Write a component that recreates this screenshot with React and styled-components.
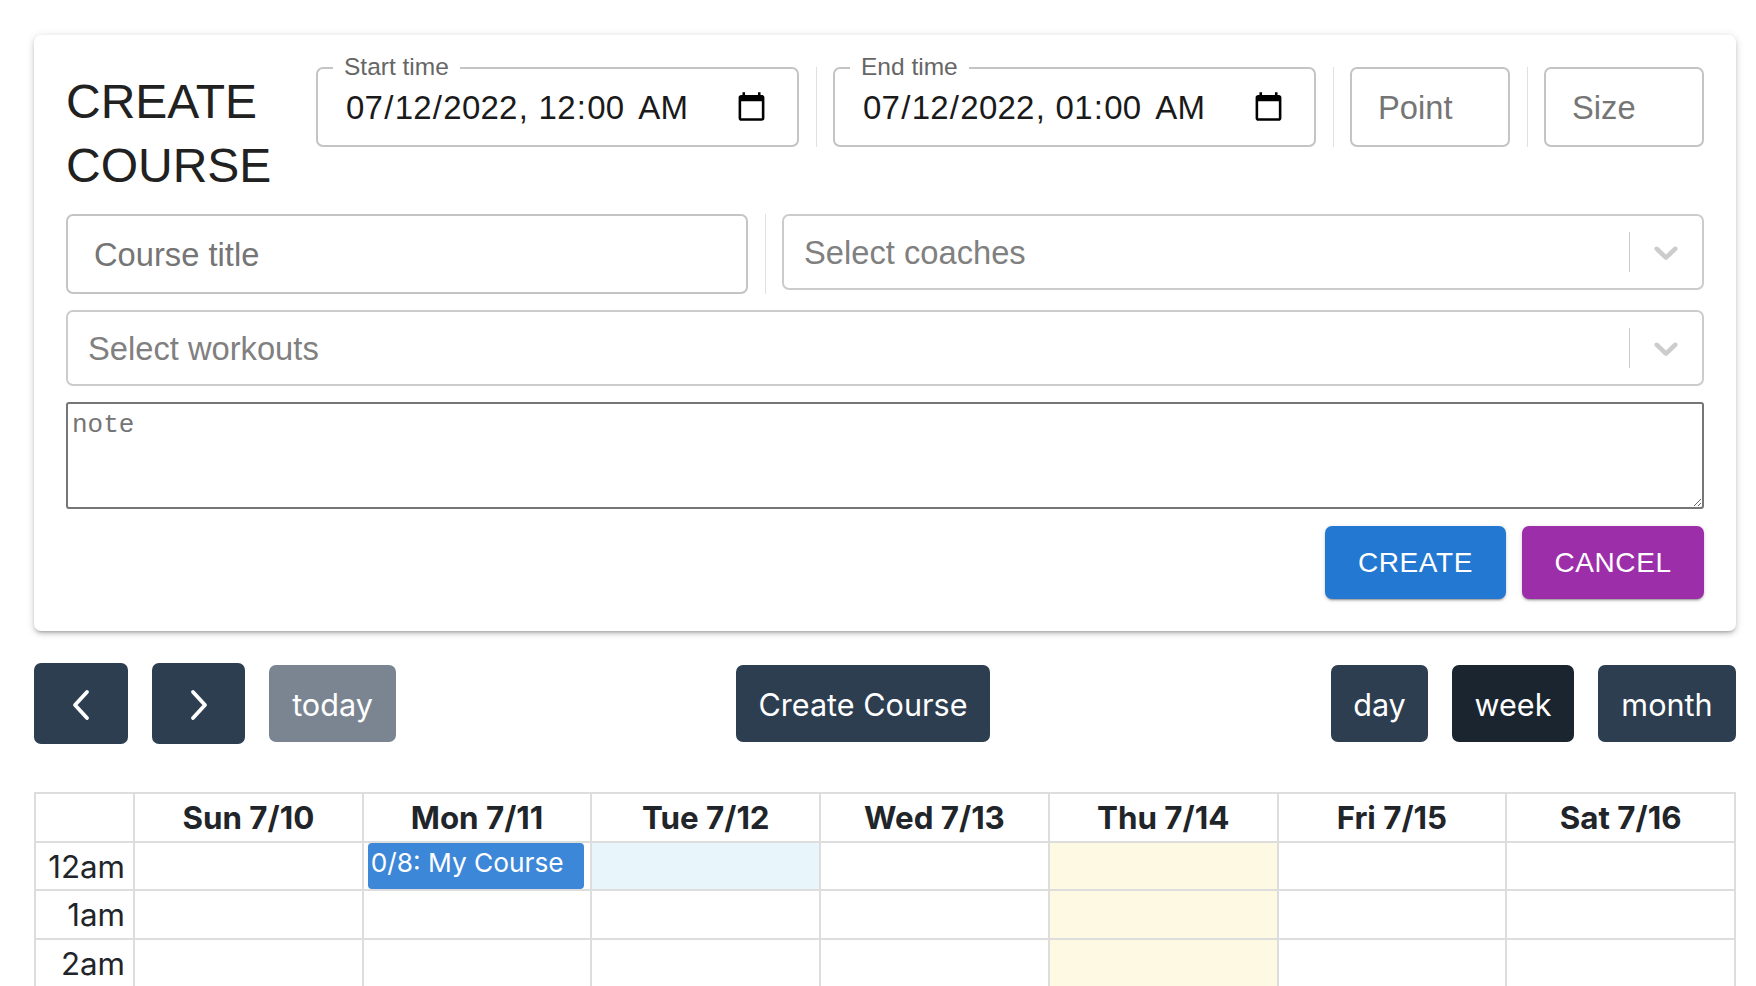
import React from "react";
import styled, { createGlobalStyle } from "styled-components";

const GlobalStyle = createGlobalStyle`
  html, body {
    margin: 0;
    padding: 0;
    height: 986px;
    overflow: hidden;
    background: #fff;
  }
  * {
    box-sizing: border-box;
  }
`;

const Page = styled.div`
  height: 986px;
  overflow: hidden;
  padding: 35px 20px 0 34px;
  font-family: "Liberation Sans", Arial, sans-serif;
`;

const Card = styled.form`
  height: 596px;
  padding: 32px;
  display: flex;
  flex-direction: column;
  gap: 17px;
  background: #fff;
  border-radius: 7px;
  box-shadow: 0 3px 3px -2px rgba(0, 0, 0, 0.2), 0 3px 5px 0 rgba(0, 0, 0, 0.14), 0 1px 10px 0 rgba(0, 0, 0, 0.12);
`;

const FieldRow = styled.div`
  display: flex;
  align-items: flex-start;
  height: ${(props) => props.$height}px;
`;

const Title = styled.h3`
  width: 250px;
  height: 130px;
  margin: 0;
  padding-top: 3px;
  font-size: 48px;
  font-weight: 400;
  line-height: 64px;
  color: #212121;
`;

const Divider = styled.span`
  flex: none;
  width: 1px;
  height: 80px;
  margin: 0 16.5px;
  background: #e0e0e0;
`;

const Outline = styled.div`
  position: relative;
  flex: ${(props) => (props.$width ? "none" : "1")};
  width: ${(props) => (props.$width ? `${props.$width}px` : "auto")};
  height: 80px;
  border: 2px solid #c4c4c4;
  border-radius: 7px;
`;

const FloatLabel = styled.label`
  position: absolute;
  top: -17px;
  left: 15px;
  padding: 0 11px 0 11px;
  background: #fff;
  font-size: 24.5px;
  line-height: 30px;
  color: #666;
`;

const DateInput = styled.input`
  width: 100%;
  height: 100%;
  padding: 1px 27px 0 27px;
  border: 0;
  outline: 0;
  background: transparent;
  font-family: "Liberation Sans", Arial, sans-serif;
  font-size: 33px;
  letter-spacing: 0.25px;
  color: #1a1a1a;

  &::-webkit-datetime-edit-ampm-field {
    margin-left: 5px;
  }
`;

const TextInput = styled.input`
  width: 100%;
  height: 100%;
  padding: 2px 26px 0;
  border: 0;
  outline: 0;
  background: transparent;
  font-family: "Liberation Sans", Arial, sans-serif;
  font-size: 32.7px;
  color: #1a1a1a;

  &::placeholder {
    color: #757575;
    opacity: 1;
  }
`;

const SelectBox = styled.div`
  flex: 1;
  height: 76px;
  display: flex;
  align-items: center;
  padding-left: 20px;
  border: 2px solid #cccccc;
  border-radius: 7px;
  background: #fff;
`;

const SelectPlaceholder = styled.span`
  flex: 1;
  padding-top: 2px;
  font-size: 32.7px;
  color: #808080;
`;

const SelectSeparator = styled.span`
  width: 1px;
  height: 40px;
  background: #cccccc;
`;

const SelectArrow = styled.svg`
  width: 40px;
  height: 40px;
  margin: 0 16px;
  fill: #cccccc;
`;

const NoteArea = styled.textarea`
  display: block;
  width: 100%;
  height: 107px;
  padding: 6px 4px;
  border: 2px solid #767676;
  border-radius: 3px;
  outline: 0;
  font-family: "Liberation Mono", monospace;
  font-size: 26px;
  line-height: 30px;

  &::placeholder {
    color: #757575;
    opacity: 1;
  }
`;

const Actions = styled.div`
  display: flex;
  justify-content: flex-end;
  gap: 16px;
`;

const ActionButton = styled.button`
  width: ${(props) => props.$width}px;
  height: 73px;
  border: 0;
  border-radius: 7px;
  background: ${(props) => props.$color};
  color: #fff;
  font-family: "Liberation Sans", Arial, sans-serif;
  font-size: 28px;
  letter-spacing: 0.6px;
  box-shadow: 0 3px 1px -2px rgba(0, 0, 0, 0.2), 0 2px 2px 0 rgba(0, 0, 0, 0.14), 0 1px 5px 0 rgba(0, 0, 0, 0.12);
`;

const Toolbar = styled.div`
  height: 81px;
  margin-top: 32px;
  display: flex;
  align-items: center;
  justify-content: space-between;
`;

const ToolbarGroup = styled.div`
  display: flex;
  align-items: center;
  gap: 24px;
`;

const CenterGroup = styled(ToolbarGroup)`
  margin-right: 1px;
`;

const CalButton = styled.button`
  width: ${(props) => props.$width}px;
  height: 77px;
  padding: 3px 0 0;
  border: 0;
  border-radius: 7px;
  background: ${(props) => props.$bg || "#2c3e50"};
  color: #fff;
  font-family: Inter, sans-serif;
  font-size: 30.6px;
  line-height: 1;
`;

const ArrowButton = styled(CalButton)`
  height: 81px;
  padding: 3px 0 0;
  display: flex;
  align-items: center;
  justify-content: center;
`;

const Chevron = styled.svg`
  width: 20px;
  height: 32px;
  fill: none;
  stroke: #fff;
  stroke-width: 3.8;
  stroke-linecap: round;
  stroke-linejoin: round;
`;

const Calendar = styled.table`
  width: 1702px;
  margin-top: 48px;
  table-layout: fixed;
  border-collapse: collapse;
  font-family: Inter, sans-serif;
  color: #212529;
`;

const HeadCell = styled.th`
  height: 49px;
  padding: 0;
  border: 2px solid #dddddd;
  font-size: 31.3px;
  font-weight: 700;
  text-align: center;
`;

const TimeCell = styled.td`
  height: 48.3px;
  padding: 2px 8px 0 0;
  border: 2px solid #dddddd;
  font-size: 31.3px;
  font-weight: 400;
  text-align: right;
`;

const DayCell = styled.td`
  position: relative;
  padding: 0;
  border: 2px solid #dddddd;
  background: ${(props) => props.$bg || "transparent"};
`;

const CourseEvent = styled.div`
  position: absolute;
  top: 0;
  left: 4px;
  right: 6px;
  height: 46px;
  padding-left: 3px;
  border-radius: 4px;
  background: #3d87d8;
  color: #fff;
  font-size: 26.3px;
  line-height: 40px;
  white-space: nowrap;
`;

const days = ["Sun 7/10", "Mon 7/11", "Tue 7/12", "Wed 7/13", "Thu 7/14", "Fri 7/15", "Sat 7/16"];
const hours = ["12am", "1am", "2am"];

const cellColor = (dayIndex, hourIndex) => {
  if (dayIndex === 4) return "#fef9e3";
  if (dayIndex === 2 && hourIndex === 0) return "#e8f6fb";
  return undefined;
};

const DateField = ({ label, value }) => (
  <Outline $width={483}>
    <FloatLabel>{label}</FloatLabel>
    <DateInput type="datetime-local" defaultValue={value} />
  </Outline>
);

const Select = ({ placeholder }) => (
  <SelectBox>
    <SelectPlaceholder>{placeholder}</SelectPlaceholder>
    <SelectSeparator />
    <SelectArrow viewBox="0 0 20 20">
      <path d="M4.516 7.548c0.436-0.446 1.043-0.481 1.576 0l3.908 3.747 3.908-3.747c0.533-0.481 1.141-0.446 1.574 0 0.436 0.445 0.408 1.197 0 1.615-0.406 0.418-4.695 4.502-4.695 4.502-0.217 0.223-0.502 0.335-0.787 0.335s-0.57-0.112-0.789-0.335c0 0-4.287-4.084-4.695-4.502s-0.436-1.17 0-1.615z" />
    </SelectArrow>
  </SelectBox>
);

const App = () => (
  <Page>
    <GlobalStyle />
    <Card>
      <FieldRow $height={130}>
        <Title>CREATE COURSE</Title>
        <DateField label="Start time" value="2022-07-12T00:00" />
        <Divider />
        <DateField label="End time" value="2022-07-12T01:00" />
        <Divider />
        <Outline>
          <TextInput placeholder="Point" />
        </Outline>
        <Divider />
        <Outline>
          <TextInput placeholder="Size" />
        </Outline>
      </FieldRow>
      <FieldRow $height={79}>
        <Outline $width={682}>
          <TextInput placeholder="Course title" />
        </Outline>
        <Divider />
        <Select placeholder="Select coaches" />
      </FieldRow>
      <FieldRow $height={75}>
        <Select placeholder="Select workouts" />
      </FieldRow>
      <NoteArea placeholder="note" />
      <Actions>
        <ActionButton type="button" $width={181} $color="#2378d2">CREATE</ActionButton>
        <ActionButton type="button" $width={182} $color="#9c2eaa">CANCEL</ActionButton>
      </Actions>
    </Card>
    <Toolbar>
      <ToolbarGroup>
        <ArrowButton $width={94}>
          <Chevron viewBox="0 0 20 32">
            <path d="M16 3 L4 16 L16 29" />
          </Chevron>
        </ArrowButton>
        <ArrowButton $width={93}>
          <Chevron viewBox="0 0 20 32">
            <path d="M4 3 L16 16 L4 29" />
          </Chevron>
        </ArrowButton>
        <CalButton $width={127} $bg="#7a8591">today</CalButton>
      </ToolbarGroup>
      <CenterGroup>
        <CalButton $width={254}>Create Course</CalButton>
      </CenterGroup>
      <ToolbarGroup>
        <CalButton $width={97}>day</CalButton>
        <CalButton $width={122} $bg="#1a252f">week</CalButton>
        <CalButton $width={138}>month</CalButton>
      </ToolbarGroup>
    </Toolbar>
    <Calendar>
      <colgroup>
        <col width="99" />
        {days.map((day) => (
          <col key={day} />
        ))}
      </colgroup>
      <thead>
        <tr>
          <HeadCell />
          {days.map((day) => (
            <HeadCell key={day}>{day}</HeadCell>
          ))}
        </tr>
      </thead>
      <tbody>
        {hours.map((hour, hourIndex) => (
          <tr key={hour}>
            <TimeCell>{hour}</TimeCell>
            {days.map((day, dayIndex) => (
              <DayCell key={day} $bg={cellColor(dayIndex, hourIndex)}>
                {dayIndex === 1 && hourIndex === 0 && <CourseEvent>0/8: My Course</CourseEvent>}
              </DayCell>
            ))}
          </tr>
        ))}
      </tbody>
    </Calendar>
  </Page>
);

export default App;
